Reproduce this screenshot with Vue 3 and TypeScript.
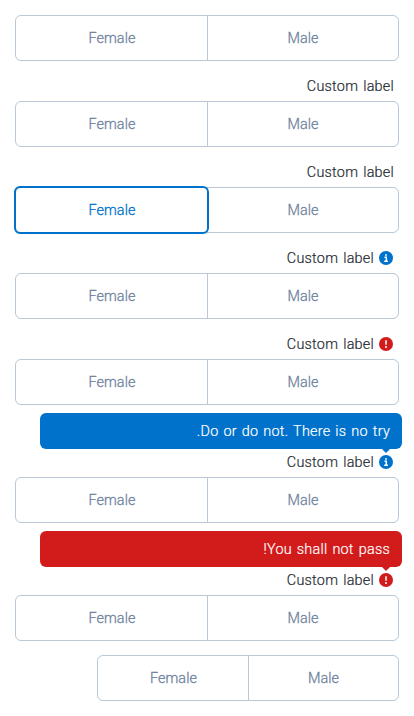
<script setup lang="ts">
type Kind = 'info' | 'error'

interface Field {
  label?: string
  kind?: Kind
  message?: string
  selected?: string
  compact?: boolean
}

const options: string[] = ['Male', 'Female']

const fields: Field[] = [
  {},
  { label: 'Custom label' },
  { label: 'Custom label', selected: 'Female' },
  { label: 'Custom label', kind: 'info' },
  { label: 'Custom label', kind: 'error' },
  { label: 'Custom label', kind: 'info', message: 'Do or do not. There is no try.' },
  { label: 'Custom label', kind: 'error', message: 'You shall not pass!' },
  { compact: true },
]
</script>

<template>
  <main class="page" dir="rtl">
    <section
      v-for="(field, i) in fields"
      :key="i"
      class="field"
      :class="{ roomy: field.message, compact: field.compact }"
    >
      <div v-if="field.label" class="label">
        <span v-if="field.kind" class="marker" :class="field.kind">
          <svg v-if="field.kind === 'info'" class="icon" viewBox="0 0 14 14">
            <circle cx="7" cy="7" r="7" />
            <path class="sign" d="M5.5 6.2H7.3V10.3M5.2 10.3H8.9M6.1 3.9H7.9" />
          </svg>
          <svg v-else class="icon" viewBox="0 0 14 14">
            <circle cx="7" cy="7" r="7" />
            <path class="sign" d="M7 3.2V7.8M7 9.1V10.9" />
          </svg>
          <span v-if="field.message" class="tooltip">{{ field.message }}</span>
        </span>
        <span class="text">{{ field.label }}</span>
      </div>
      <div class="group">
        <button
          v-for="option in options"
          :key="option"
          type="button"
          class="option"
          :class="{ selected: field.selected === option }"
        >
          {{ option }}
        </button>
      </div>
    </section>
  </main>
</template>

<style>
body {
  background: #fff;
}
</style>

<style scoped>
.page {
  box-sizing: border-box;
  padding: 15px;
  font: 300 14.4px/22px Roboto, 'Liberation Sans', sans-serif;
  -webkit-text-stroke: 0.2px;
  color: #252a31;
}

.field + .field {
  margin-top: 14px;
}

.field.roomy {
  margin-top: 46px;
}

.field.compact {
  width: 302px;
}

.label {
  display: flex;
  align-items: center;
  gap: 5px;
  height: 22px;
  margin-bottom: 4px;
  padding: 0 5px;
  letter-spacing: 0.25px;
  word-spacing: 1.2px;
}

.text {
  padding-top: 2px;
}

.marker {
  position: relative;
  display: flex;
  margin-right: 1px;
}

.icon {
  width: 14px;
  height: 14px;
}

.info {
  --tone: #0172cb;
}

.error {
  --tone: #d21c1c;
}

.icon circle {
  fill: var(--tone);
}

.sign {
  fill: none;
  stroke: #fff;
  stroke-width: 1.5;
}

.tooltip {
  position: absolute;
  right: -9px;
  bottom: 20px;
  box-sizing: border-box;
  width: 362px;
  height: 36px;
  padding: 8px 12px 6px;
  border-radius: 6px;
  background: var(--tone);
  color: #fff;
}

.tooltip::after {
  content: '';
  position: absolute;
  top: 100%;
  right: 12px;
  border: 4px solid transparent;
  border-top-color: var(--tone);
  border-bottom: 0;
}

.group {
  display: flex;
  box-sizing: border-box;
  height: 46px;
  border: 1px solid #bac7d5;
  border-radius: 6px;
}

.option {
  position: relative;
  flex: 1 1 0;
  padding: 2px 0 0 1px;
  border: 0;
  background: none;
  font: inherit;
  -webkit-text-stroke: 0.3px;
  letter-spacing: 0.1px;
  color: #6f839e;
}

.option:first-child {
  padding-left: 0;
  border-left: 1px solid #bac7d5;
}

.option.selected {
  color: #0172cb;
}

.option.selected::after {
  content: '';
  position: absolute;
  inset: -2px;
  border: 2px solid #0172cb;
  border-radius: 6px;
}
</style>
